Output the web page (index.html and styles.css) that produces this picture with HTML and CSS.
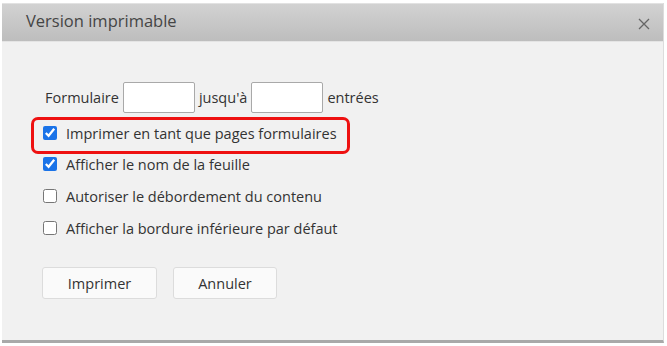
FILE: index.html
```html
<!DOCTYPE html>
<html lang="fr">
<head>
    <meta charset="UTF-8" />
    <title>Version imprimable</title>
    <link rel="stylesheet" href="styles.css">
</head>
<body>
    <div class="dialog">
        <div class="dialog-header">
            <span class="dialog-title">Version imprimable</span>
            <span class="dialog-close">
                <svg width="12" height="12" viewBox="0 0 12 12"><path d="M1 1 L11 11 M11 1 L1 11" stroke="#666" stroke-width="1.3" fill="none"/></svg>
            </span>
        </div>
        <div class="dialog-body">
            <div class="range-row">
                <span>Formulaire</span>
                <input type="text" class="range-input" />
                <span>jusqu'à</span>
                <input type="text" class="range-input" />
                <span>entrées</span>
            </div>
            <div class="options">
                <label class="option highlight"><input type="checkbox" checked /> Imprimer en tant que pages formulaires</label>
                <label class="option"><input type="checkbox" checked /> Afficher le nom de la feuille</label>
                <label class="option"><input type="checkbox" /> Autoriser le débordement du contenu</label>
                <label class="option"><input type="checkbox" /> Afficher la bordure inférieure par défaut</label>
            </div>
            <div class="actions">
                <button class="btn btn-print">Imprimer</button>
                <button class="btn btn-cancel">Annuler</button>
            </div>
        </div>
    </div>
</body>
</html>
```

FILE: styles.css
```css
* {
    box-sizing: border-box;
}

body {
    margin: 0;
    background: #fff;
    font-family: 'Open Sans', 'Noto Sans', sans-serif;
    color: #333;
}

.dialog {
    margin: 3px 3px 0 2px;
    height: 340px;
    background: #f1f1f1;
    border-right: 1px solid #dcdcdc;
    border-bottom: 3px solid #a9a9a9;
    display: flex;
    flex-direction: column;
}

.dialog-header {
    height: 39px;
    flex-shrink: 0;
    background: linear-gradient(180deg, #d2d2d2 0%, #bdbdbd 100%);
    border-top: 1px solid #e2e2e2;
    border-bottom: 1px solid #e4e4e4;
    display: flex;
    align-items: center;
    justify-content: space-between;
    padding: 0 13px 0 24px;
}

.dialog-title {
    font-size: 16.5px;
    color: #454545;
    margin-top: -4px;
}

.dialog-close {
    display: flex;
    margin-top: 2px;
}

.dialog-body {
    padding: 39px 0 0 29px;
}

.range-row {
    display: flex;
    align-items: center;
    gap: 3px;
    font-size: 14.5px;
    margin-left: 14px;
    height: 32px;
}

.range-input {
    width: 72px;
    height: 31px;
    border: 1px solid #a9a9a9;
    border-radius: 2px;
    background: #fff;
    margin: 0 1px;
}

.options {
    margin-top: 4px;
    display: flex;
    flex-direction: column;
    width: 319px;
}

.option {
    display: flex;
    align-items: center;
    height: 32px;
    font-size: 14.5px;
    color: #333;
    padding-left: 12px;
}

.option input {
    width: 14px;
    height: 14px;
    margin: 0 9px 0 0;
    accent-color: #1a73e8;
}

.highlight {
    height: 37px;
    border: 3px solid #ee1111;
    border-radius: 7px;
    padding: 0 0 5px 9px;
    margin-bottom: -6px;
}

.actions {
    margin-top: 23px;
    margin-left: 11px;
    display: flex;
    gap: 16px;
}

.btn {
    height: 32px;
    background: #fafafa;
    border: 1px solid #dcdcdc;
    border-radius: 3px;
    font-family: 'Open Sans', 'Noto Sans', sans-serif;
    font-size: 14.5px;
    color: #333;
    padding: 0;
}

.btn-print {
    width: 115px;
}

.btn-cancel {
    width: 104px;
}
```
